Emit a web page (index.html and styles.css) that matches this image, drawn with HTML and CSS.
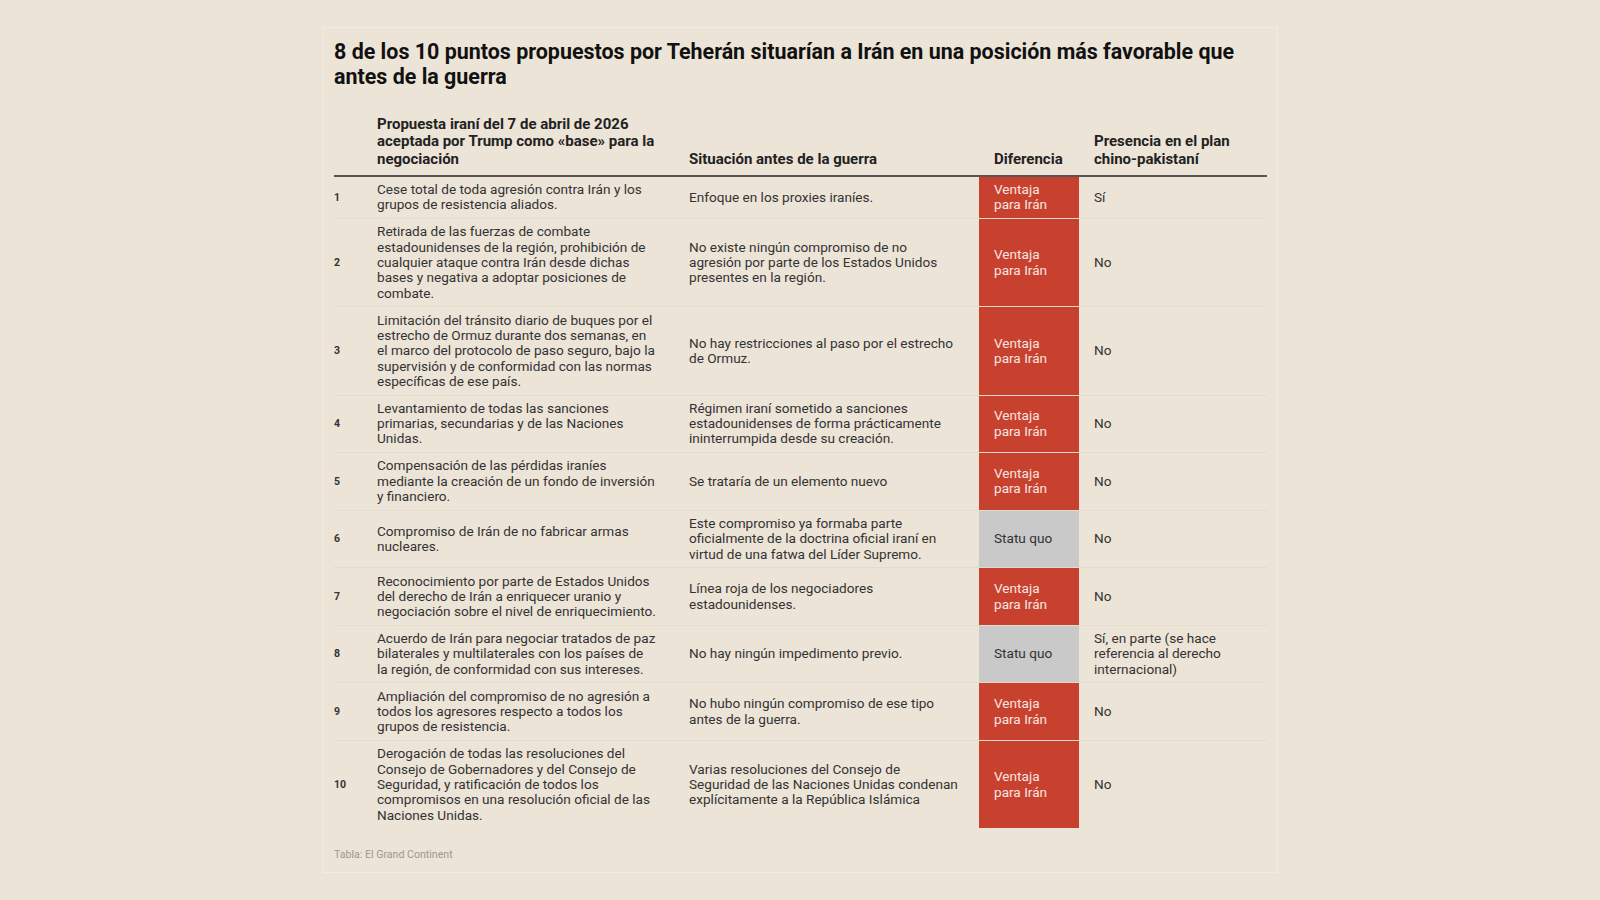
FILE: index.html
```html
<!DOCTYPE html>
<html lang="es">
<head>
<meta charset="utf-8">
<title>8 de los 10 puntos</title>
<link rel="stylesheet" href="styles.css">
</head>
<body>
<div class="card">
  <h1 class="title">8 de los 10 puntos propuestos por Teherán situarían a Irán en una posición más favorable que antes de la guerra</h1>
  <table class="tbl">
    <colgroup>
      <col class="c-num"><col class="c-prop"><col class="c-sit"><col class="c-dif"><col class="c-pres">
    </colgroup>
    <thead>
      <tr>
        <th class="num"></th>
        <th class="prop">Propuesta iraní del 7 de abril de 2026 aceptada por Trump como «base» para la negociación</th>
        <th class="sit">Situación antes de la guerra</th>
        <th>Diferencia</th>
        <th>Presencia en el plan chino-pakistaní</th>
      </tr>
    </thead>
    <tbody>
      <tr>
        <td class="num">1</td>
        <td class="prop">Cese total de toda agresión contra Irán y los grupos de resistencia aliados.</td>
        <td class="sit">Enfoque en los proxies iraníes.</td>
        <td class="dif red">Ventaja para Irán</td>
        <td>Sí</td>
      </tr>
      <tr>
        <td class="num">2</td>
        <td class="prop">Retirada de las fuerzas de combate estadounidenses de la región, prohibición de cualquier ataque contra Irán desde dichas bases y negativa a adoptar posiciones de combate.</td>
        <td class="sit">No existe ningún compromiso de no agresión por parte de los Estados Unidos presentes en la región.</td>
        <td class="dif red">Ventaja para Irán</td>
        <td>No</td>
      </tr>
      <tr>
        <td class="num">3</td>
        <td class="prop">Limitación del tránsito diario de buques por el estrecho de Ormuz durante dos semanas, en el marco del protocolo de paso seguro, bajo la supervisión y de conformidad con las normas específicas de ese país.</td>
        <td class="sit">No hay restricciones al paso por el estrecho de Ormuz.</td>
        <td class="dif red">Ventaja para Irán</td>
        <td>No</td>
      </tr>
      <tr>
        <td class="num">4</td>
        <td class="prop">Levantamiento de todas las sanciones primarias, secundarias y de las Naciones Unidas.</td>
        <td class="sit">Régimen iraní sometido a sanciones estadounidenses de forma prácticamente ininterrumpida desde su creación.</td>
        <td class="dif red">Ventaja para Irán</td>
        <td>No</td>
      </tr>
      <tr>
        <td class="num">5</td>
        <td class="prop">Compensación de las pérdidas iraníes mediante la creación de un fondo de inversión y financiero.</td>
        <td class="sit">Se trataría de un elemento nuevo</td>
        <td class="dif red">Ventaja para Irán</td>
        <td>No</td>
      </tr>
      <tr>
        <td class="num">6</td>
        <td class="prop">Compromiso de Irán de no fabricar armas nucleares.</td>
        <td class="sit">Este compromiso ya formaba parte oficialmente de la doctrina oficial iraní en virtud de una fatwa del Líder Supremo.</td>
        <td class="dif gray">Statu quo</td>
        <td>No</td>
      </tr>
      <tr>
        <td class="num">7</td>
        <td class="prop">Reconocimiento por parte de Estados Unidos del derecho de Irán a enriquecer uranio y negociación sobre el nivel de enriquecimiento.</td>
        <td class="sit">Línea roja de los negociadores estadounidenses.</td>
        <td class="dif red">Ventaja para Irán</td>
        <td>No</td>
      </tr>
      <tr>
        <td class="num">8</td>
        <td class="prop">Acuerdo de Irán para negociar tratados de paz bilaterales y multilaterales con los países de la región, de conformidad con sus intereses.</td>
        <td class="sit">No hay ningún impedimento previo.</td>
        <td class="dif gray">Statu quo</td>
        <td>Sí, en parte (se hace referencia al derecho internacional)</td>
      </tr>
      <tr>
        <td class="num">9</td>
        <td class="prop">Ampliación del compromiso de no agresión a todos los agresores respecto a todos los grupos de resistencia.</td>
        <td class="sit">No hubo ningún compromiso de ese tipo antes de la guerra.</td>
        <td class="dif red">Ventaja para Irán</td>
        <td>No</td>
      </tr>
      <tr>
        <td class="num">10</td>
        <td class="prop">Derogación de todas las resoluciones del Consejo de Gobernadores y del Consejo de Seguridad, y ratificación de todos los compromisos en una resolución oficial de las Naciones Unidas.</td>
        <td class="sit">Varias resoluciones del Consejo de Seguridad de las Naciones Unidas condenan explícitamente a la República Islámica</td>
        <td class="dif red">Ventaja para Irán</td>
        <td>No</td>
      </tr>
    </tbody>
  </table>
  <p class="source">Tabla: El Grand Continent</p>
</div>
</body>
</html>
```

FILE: styles.css
```css
html, body {
  margin: 0;
  padding: 0;
  background: #ece4d7;
}
body {
  font-family: Roboto, "Liberation Sans", sans-serif;
  color: #333;
  padding-top: 27px;
}
.card {
  width: 933px;
  margin: 0 0 0 323px;
  padding: 12px 10px 10px 10px;
  border: 1px solid #f1ebe1;
  box-sizing: content-box;
}
.title {
  margin: 0;
  font-size: 21.45px;
  line-height: 24.7px;
  font-weight: 700;
  color: #111;
}
.tbl {
  margin-top: 26.5px;
  width: 933px;
  border-collapse: collapse;
  table-layout: fixed;
  font-size: 13.6px;
  line-height: 15.33px;
}
.c-num { width: 28px; }
.c-prop { width: 312px; }
.c-sit { width: 305px; }
.c-dif { width: 100px; }
.c-pres { width: 188px; }
.tbl th {
  text-align: left;
  vertical-align: bottom;
  font-size: 15px;
  line-height: 17.3px;
  font-weight: 700;
  color: #222;
  padding: 0 15px 7px 15px;
  border-bottom: 2px solid #5a5652;
}
.tbl td {
  vertical-align: middle;
  padding: 5.3px 15px;
  border-bottom: 1px solid #e3dbcd;
}
.tbl td.prop { padding-right: 17.5px; }
.tbl td.sit { padding-right: 18.5px; }
.tbl tbody tr:last-child td { border-bottom: none; }
.tbl .num {
  padding-left: 0;
  padding-right: 0;
  font-size: 10.5px;
  font-weight: 700;
  color: #333;
}
.dif.red {
  background: #c8412f;
  color: #f6e6e0;
}
.dif.gray {
  background: #c9c9c9;
  color: #333;
}
.source {
  margin: 21px 0 0 0;
  font-size: 10.6px;
  line-height: 12.5px;
  color: #9c978f;
}
```
